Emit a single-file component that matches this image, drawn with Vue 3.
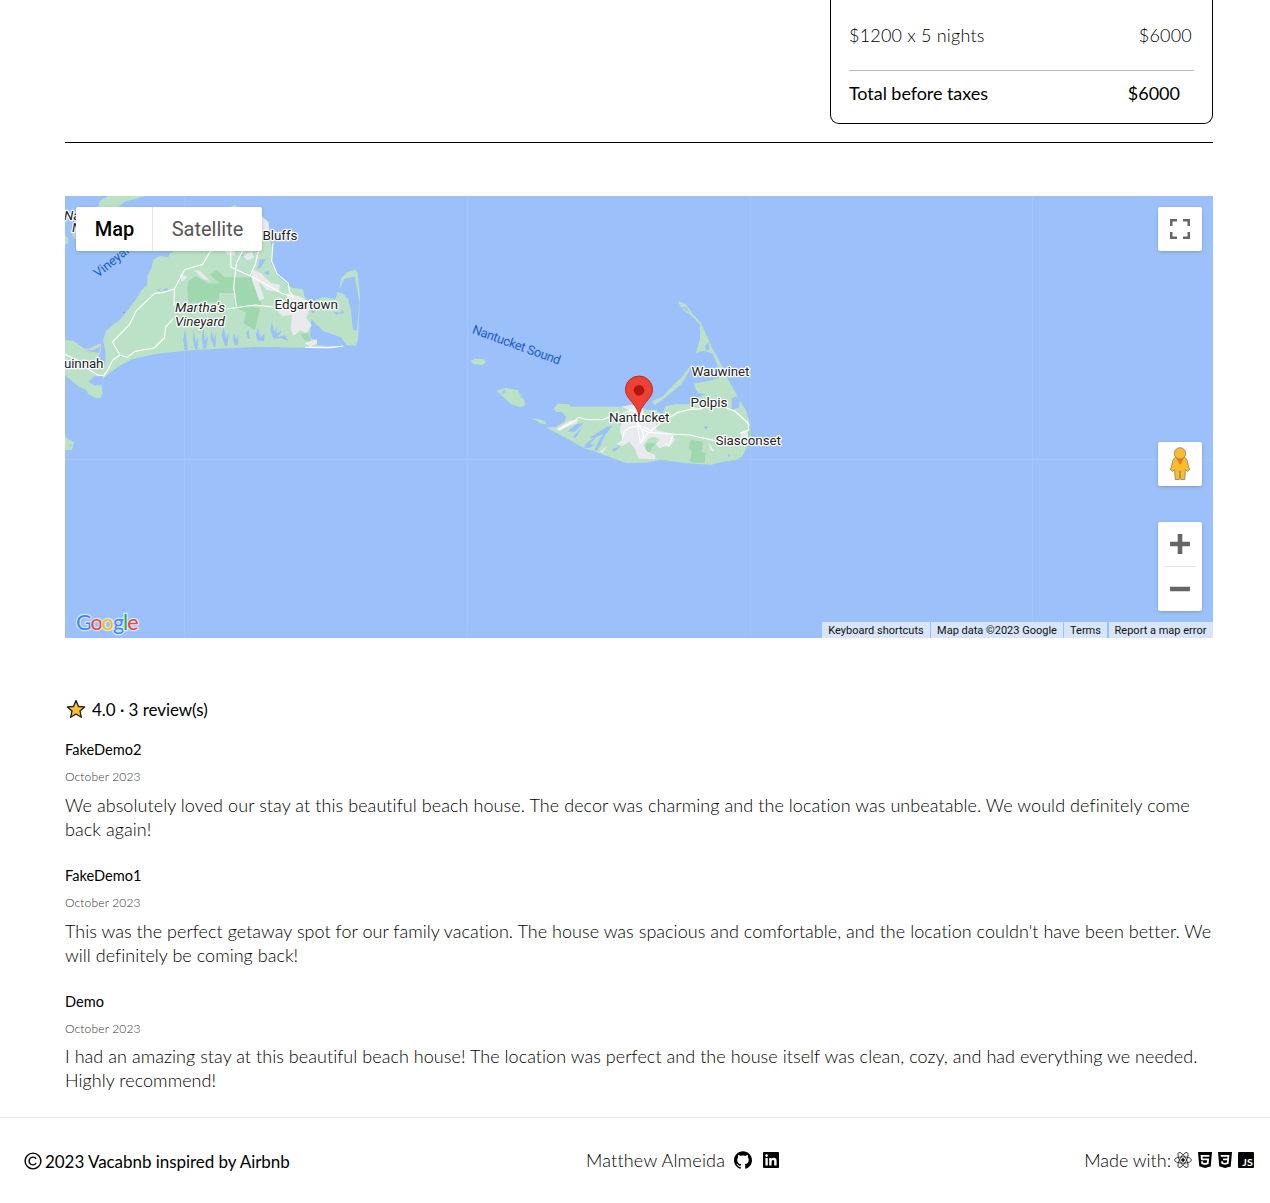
<script setup>
const reviews = [
  {
    name: 'FakeDemo2',
    date: 'October 2023',
    lines: [
      'We absolutely loved our stay at this beautiful beach house. The decor was charming and the location was unbeatable. We would definitely come',
      'back again!'
    ]
  },
  {
    name: 'FakeDemo1',
    date: 'October 2023',
    lines: [
      "This was the perfect getaway spot for our family vacation. The house was spacious and comfortable, and the location couldn't have been better. We",
      'will definitely be coming back!'
    ]
  },
  {
    name: 'Demo',
    date: 'October 2023',
    lines: [
      'I had an amazing stay at this beautiful beach house! The location was perfect and the house itself was clean, cozy, and had everything we needed.',
      'Highly recommend!'
    ]
  }
]
</script>

<template>
  <div class="page">
    <main class="content">
      <section class="price-card">
        <div class="price-row nightly"><span>$1200 x 5 nights</span><span>$6000</span></div>
        <div class="price-row total"><span>Total before taxes</span><span>$6000</span></div>
      </section>
      <div class="divider"></div>

      <section class="map">
        <svg class="tiles" viewBox="0 0 1148 442" width="1148" height="442">
          <rect width="1148" height="442" fill="#9cc0f9" />
          <path d="M119.500 0V442M402.500 0V442M685.500 0V442M967.500 0V442M0 263.500H1148" stroke="#a4c5f8" fill="none" />
          <!-- Martha's Vineyard -->
          <g transform="scale(.33333)">
            <g fill="#bbe2c6">
              <path d="M100 33L105 14L130 0H240L215 8L180 16L160 33ZM25 92L33 100V132L22 120ZM0 118L9 126L10 142L0 146Z" />
              <path fill-rule="evenodd" d="M495 33L508 26L522 33L590 60L610 80L614 125L621 155L619 205L640 242L667 265L680 275L714 280L718 300L729 316L735 342L747 353L750 312L775 304L812 309L818 288L836 294L850 312L858 345L864 402L875 405L880 360L883 318L876 276L869 242L838 248L823 278L828 247L848 228L870 221L878 230L885 298L883 354L879 430L873 449L846 448L826 423L776 406L749 380L739 368L735 425L757 435L756 448L830 452L715 455L590 452L480 457L360 464L275 473L200 490L160 512L132 532L114 548L109 566L113 591L107 605L91 607L68 592L66 584L42 572L0 538V431L25 434L48 451L63 465L105 470L99 492L97 520L115 518L122 492L121 463L114 433L123 405L144 386L161 375L180 353L207 319L228 285L247 265L247 240L259 217L266 190L285 180L310 184L312 174L340 160Z" />
            </g>
            <g fill="#9fd7af">
              <path d="M370 255L392 240L428 262H465L434 237L455 223L480 244H558L575 278L590 326L545 330L585 337L570 403L536 382L543 350L507 332V291H463L461 318L370 320L367 275ZM706 414L730 412L738 438L718 433Z" />
            </g>
            <g fill="#e8eaed">
              <path d="M386 222L405 225L434 254L416 250ZM344 234L368 243L350 258ZM590 60L610 78L614 112L590 120ZM478 165H509V179L488 175ZM535 180L560 165L567 185L548 193ZM563 220L588 232L616 260L645 266L642 289L605 282L580 255L598 307L583 314L560 250ZM668 292L706 302L731 316L732 342L724 367L740 388L725 412L706 403L686 420L677 398L681 357L650 360L630 332L662 318ZM718 440L756 430V443L735 453Z" />
            </g>
            <path d="M46 450L60 458L75 457L101 443H109L107 470L84 474L65 468Z" fill="#c8d6d0" />
            <path d="M62 464L86 461L106 452L102 470Z" fill="#9cc0f9" />
            <g fill="#9cc0f9">
              <path d="M359 463L355 430L359 402L364 421L368 463ZM391 461L384 432L386 402L392 440L399 420L398 461ZM416 459L410 426L415 396L420 433L430 420L424 456ZM447 453L437 426L439 402L447 431L454 408L451 453ZM480 451L470 420L475 394L484 427L492 405L487 450ZM509 448L504 429L507 410L515 433L521 412L519 447ZM549 427L544 411L550 400L555 430ZM578 434L573 417L579 395L587 426L600 410L597 435ZM625 428L616 402L620 378L628 408L640 385L633 412L651 404L638 423L660 418L670 436L649 427Z" />
              <path d="M70 557L88 541L115 540L108 566L90 569ZM273 282L287 278L285 286ZM293 282L304 275L313 286ZM577 220L584 190L603 190L587 215ZM596 231L611 224L613 238ZM525 182L531 174L538 180Z" />
              <path d="M805 347L825 350L833 343L838 350L815 356Z" />
            </g>
            <path d="M0 475L37 493L72 521L98 537L116 539L129 521L143 493L165 477L142 438L193 386L215 343L269 292L297 289L328 279L342 253L359 221L413 205L437 165M328 279L327 330M325 368L302 393L298 426L267 456L209 466L187 484L165 477M497 165L498 214L555 239L613 271L650 292L686 303L673 285L670 262L636 233L620 195L624 140M580 165L571 205L555 239M533 165L514 202L506 273L514 332M485 339L570 327L625 333M720 454L795 455L835 450" fill="none" stroke="#fff" stroke-width="3.400" stroke-linejoin="round" />
            <circle cx="176" cy="349" r="2" fill="#3ba766" />
          </g>
          <path d="M0 239L3 243L9 246L7 254H0Z" fill="#bbe2c6" />
          <circle cx="5.500" cy="249.500" r="1" fill="#9cc0f9" />
          <!-- Nantucket -->
          <g transform="translate(395 94) scale(.33333)">
            <g fill="#bbe2c6">
              <path d="M31 214L43 206L73 208L78 216L66 225L42 222ZM110 302L137 293L172 300L190 325L197 345L180 352L151 341L127 319ZM215 384L255 392L259 402L243 401Z" />
              <path d="M656 34L678 43L696 69L723 99L735 126L757 175L785 226L805 269L842 335L860 365L870 404L873 438L861 472L847 499L827 510L785 516L754 524L680 520L601 509L559 518L498 519L400 483L373 475L328 449L257 412L285 412L313 395L319 380L304 365L287 366L281 354L294 341L329 343L331 350L491 350L514 344L567 360L589 360L589 350L575 334L607 320L637 288L663 263L690 229L708 190L720 146L720 104L693 75L672 64L656 40Z" />
            </g>
            <path d="M707 190L730 182L758 190L773 227L793 254L765 269L707 282L703 288L712 305L739 313L718 320L695 343L648 342L617 348L607 371L592 364L585 345L607 329L640 303L665 281L686 247L696 217ZM735 168L745 157L748 178L738 182ZM815 325L831 319L840 332L836 353L815 359ZM731 410L740 407L745 414L737 418ZM805 490L812 497L805 502ZM370 473L384 455L408 441L401 450L389 462L402 465L391 473ZM388 443L408 431L441 410L457 409L434 437L422 465L409 483L403 480L418 449L430 431L403 445ZM338 441L369 409L347 444ZM322 424L351 402L372 398L343 426ZM455 478L485 467L463 485Z" fill="#9cc0f9" />
            <path d="M701 280L745 274L795 259L812 284L820 315L800 335L760 320L712 307Z" fill="#bbe2c6" />
            <path d="M664 51L678 49L688 66L677 64ZM124 307L134 297L138 309L127 314ZM177 311L190 323L186 328Z" fill="#a7cce8" />
            <g fill="#9fd7af">
              <path d="M692 449L728 455L725 486L737 489L734 519L690 517L695 485L686 475ZM559 459L589 460L574 475L566 500L552 488ZM468 469L498 449L489 469ZM862 410H873V437L863 441Z" />
            </g>
            <g fill="#e8eaed">
              <path d="M289 417L326 393L354 389L351 399L319 412L300 423ZM485 350L514 344L548 354L553 372L545 385L573 400L588 400L590 421L633 430L645 451L633 464L598 475L587 462L600 448L581 440L564 447L550 466L561 484L586 495V507L535 506L525 477L508 455L486 469L468 463L489 449L480 426L482 406L505 382L505 359ZM417 487L441 468L430 487ZM746 457L763 484L752 481ZM843 430L863 421L864 448L844 448Z" />
            </g>
            <path d="M295 419L347 391L355 382L375 388L428 389L452 379M487 371L514 359L553 373M530 390L541 415L564 427L635 432L690 435L764 452M570 423L601 400L654 367L690 358L728 356M799 354L824 363L864 399L866 420L840 430M487 450L492 426L510 412L540 407L551 436L542 461M566 425L545 455M577 425L549 410M640 434L627 469L616 460M530 390L541 460" fill="none" stroke="#fff" stroke-width="3.400" stroke-linejoin="round" />
          </g>
          <g class="places">
            <text x="-1" y="23.500" font-style="italic">Na</text><text x="7" y="36" font-style="italic">N</text>
            <text x="197.500" y="43.500" textLength="35">Bluffs</text>
            <text x="209.500" y="113" textLength="63.500">Edgartown</text>
            <text x="110" y="116" textLength="50" font-style="italic">Martha's</text>
            <text x="110" y="129.500" textLength="50" font-style="italic">Vineyard</text>
            <text x="-1" y="171.500" textLength="39.500">uinnah</text>
            <text x="626.500" y="179.500" textLength="58">Wauwinet</text>
            <text x="625.500" y="210.500" textLength="37">Polpis</text>
            <text x="544" y="226" textLength="60.500">Nantucket</text>
            <text x="650.500" y="249" textLength="65.500">Siasconset</text>
          </g>
          <g class="waters">
            <text transform="translate(33 82) rotate(-39)">Vineyard</text>
            <text transform="translate(406.500 137) rotate(20)" textLength="93">Nantucket Sound</text>
          </g>
          <g transform="translate(560 180)">
            <path d="M14 40.500C13 33.500 10.500 30.500 6.500 25.500C3 21 .5 18.500 .5 13.500A13.500 13.500 0 0 1 27.500 13.500C27.500 18.500 25 21 21.500 25.500C17.500 30.500 15 33.500 14 40.500Z" fill="#ea4335" stroke="#c5221f" />
            <circle cx="14" cy="14.300" r="5.300" fill="#b31412" />
          </g>
          <text class="google" x="11" y="434" textLength="62.500"><tspan fill="#4285f4">G</tspan><tspan fill="#ea4335">o</tspan><tspan fill="#fbbc04">o</tspan><tspan fill="#4285f4">g</tspan><tspan fill="#34a853">l</tspan><tspan fill="#ea4335">e</tspan></text>
        </svg>

        <div class="map-types"><span class="active">Map</span><span class="satellite">Satellite</span></div>
        <button class="control fullscreen" aria-label="Toggle fullscreen view">
          <svg width="20" height="20" viewBox="0 0 20 20"><path d="M0 0H7V2.500H2.500V7H0ZM13 0H20V7H17.500V2.500H13ZM0 13H2.500V17.500H7V20H0ZM17.500 13H20V20H13V17.500H17.500Z" fill="#666" /></svg>
        </button>
        <button class="control pegman" aria-label="Street View">
          <svg width="20" height="34" viewBox="0 0 20 34">
            <path d="M5 10.500H15L17 13L19.500 23L17.500 24.500L15.400 22.500L14.800 32.500H10.700L10.200 24H9.800L9.300 32.500H5.200L4.600 22.500L2.500 24.500L.5 23L3 13Z" fill="#fbbc2c" stroke="#888066" stroke-width=".8" />
            <path d="M6.200 11.500H13.800L10.200 18Z" fill="#e57e25" />
            <circle cx="10" cy="6.400" r="5.700" fill="#fbbc2c" stroke="#888066" stroke-width=".8" />
          </svg>
        </button>
        <div class="zoomer">
          <svg width="44" height="89" viewBox="0 0 44 89"><path d="M12 22H32M22 12V32M12 67H32" stroke="#666" stroke-width="4.600" /><path d="M5 44.500H38" stroke="#e6e6e6" /></svg>
        </div>
        <div class="attribution">
          <span class="keys">Keyboard shortcuts</span><span class="data">Map data ©2023 Google</span><span class="terms">Terms</span><span class="report">Report a map error</span>
        </div>
      </section>

      <section class="reviews">
        <h2>
          <svg width="22" height="20" viewBox="0 0 22 20"><path d="M11 1.400L13.500 7.500L19.600 7.900L15 12.100L16.400 18.300L11 15L5.600 18.300L7 12.100L2.400 7.900L8.500 7.500Z" fill="#ffc02e" stroke="#1d1d1d" stroke-width="1.300" stroke-linejoin="round" /></svg>
          <span>4.0 · 3 review(s)</span>
        </h2>
        <article v-for="(r, i) in reviews" :key="r.name" :class="'review-' + i">
          <h3>{{ r.name }}</h3>
          <time>{{ r.date }}</time>
          <p><span v-for="line in r.lines" :key="line">{{ line }}</span></p>
        </article>
      </section>
    </main>

    <footer>
      <div class="copyright">
        <svg width="18" height="18" viewBox="0 0 18 18" fill="none" stroke="#000" stroke-width="1.400"><circle cx="9" cy="9" r="7.900" /><path d="M12.200 6.800A3.900 3.900 0 1 0 12.200 11.200" /></svg>
        <span>2023 Vacabnb inspired by Airbnb</span>
      </div>
      <div class="author">
        <span>Matthew Almeida</span>
        <svg class="github" width="18" height="18" viewBox="0 0 24 24"><path d="M12 .297c-6.630 0-12 5.373-12 12 0 5.303 3.438 9.800 8.205 11.385.6.113.82-.258.82-.577 0-.285-.01-1.040-.015-2.040-3.338.724-4.042-1.610-4.042-1.610C4.422 18.070 3.633 17.700 3.633 17.700c-1.087-.744.084-.729.084-.729 1.205.084 1.838 1.236 1.838 1.236 1.070 1.835 2.809 1.305 3.495.998.108-.776.417-1.305.76-1.605-2.665-.3-5.466-1.332-5.466-5.930 0-1.310.465-2.380 1.235-3.220-.135-.303-.54-1.523.105-3.176 0 0 1.005-.322 3.300 1.230.96-.267 1.980-.399 3-.405 1.020.006 2.040.138 3 .405 2.280-1.552 3.285-1.230 3.285-1.230.645 1.653.24 2.873.12 3.176.765.84 1.230 1.910 1.230 3.220 0 4.610-2.805 5.625-5.475 5.920.42.36.81 1.096.81 2.220 0 1.606-.015 2.896-.015 3.286 0 .315.21.69.825.57C20.565 22.092 24 17.592 24 12.297c0-6.627-5.373-12-12-12" /></svg>
        <svg class="linkedin" width="16" height="16" viewBox="0 0 16 16"><rect width="16" height="16" rx="1" /><g fill="#fff"><circle cx="3.600" cy="3.600" r="1.350" /><path d="M2.400 6H4.800V13.600H2.400ZM6.200 6H8.500V7C9 6.200 9.800 5.800 10.900 5.800C13 5.800 13.600 7.200 13.600 9.400V13.600H11.200V9.900C11.200 8.700 11 7.900 10 7.900C8.900 7.900 8.600 8.700 8.600 9.900V13.600H6.200Z" /></g></svg>
      </div>
      <div class="made">
        <span>Made with:</span>
        <svg class="react" width="18" height="18" viewBox="0 0 18 18" fill="none" stroke="#111" stroke-width=".75"><ellipse cx="9" cy="9" rx="8.500" ry="3.200" /><ellipse cx="9" cy="9" rx="8.500" ry="3.200" transform="rotate(60 9 9)" /><ellipse cx="9" cy="9" rx="8.500" ry="3.200" transform="rotate(120 9 9)" /><circle cx="9" cy="9" r="1.400" fill="#111" /></svg>
        <svg class="html" width="14" height="16" viewBox="1.500 0 21 24"><path fill-rule="evenodd" d="M1.500 0h21l-1.910 21.563L11.977 24l-8.564-2.438L1.500 0zm7.031 9.750l-.232-2.718 10.059.003.23-2.622L5.412 4.410l.698 8.010h9.126l-.326 3.426-2.910.804-2.955-.81-.188-2.110H6.248l.33 4.171L12 19.351l5.379-1.443.744-8.157H8.531z" /></svg>
        <svg class="css" width="14" height="16" viewBox="1.500 0 21 24"><path fill-rule="evenodd" d="M1.500 0h21l-1.910 21.563L11.977 24l-8.565-2.438L1.500 0zm17.090 4.413L5.410 4.410l.213 2.622 10.125.002-.255 2.716h-6.640l.24 2.573h6.182l-.366 3.523-2.910.804-2.956-.81-.188-2.110h-2.610l.29 3.855L12 19.288l5.373-1.530L18.590 4.414z" /></svg>
        <svg class="js" width="16" height="16" viewBox="0 0 16 16"><rect width="16" height="16" rx="1" /><text x="4.300" y="14" textLength="10.500" lengthAdjust="spacingAndGlyphs" fill="#fff">JS</text></svg>
      </div>
    </footer>
  </div>
</template>

<style>
body { background: #fff; overflow: hidden; }
</style>

<style scoped>
.page { height: 1203px; display: flex; flex-direction: column; font-family: Lato, "Open Sans", sans-serif; color: #000; overflow: hidden; }
.page * { box-sizing: border-box; }
.content { width: 1148px; margin-left: 65px; height: 1117px; display: flex; flex-direction: column; flex: none; }
.price-card { align-self: flex-end; width: 383px; height: 124px; flex: none; border: 1px solid #000; border-top: 0; border-radius: 0 0 9px 9px; padding: 0 18px; font-size: 18px; }
.price-row { display: flex; justify-content: space-between; white-space: nowrap; }
.nightly { height: 71px; padding: 23px 2px 0 0; border-bottom: 1px solid #bbb; line-height: 24px; font-weight: 300; letter-spacing: .2px; }
.total { padding: 10px 14px 0 0; line-height: 24px; }
.total span:first-child { letter-spacing: -.06px; }
.divider { height: 1px; background: #000; margin: 18px 0 53px; flex: none; }

.map { position: relative; height: 442px; flex: none; overflow: hidden; font-family: Roboto, sans-serif; }
.tiles { display: block; }
.places { font-size: 13.500px; fill: #202124; stroke: #fff; stroke-width: 2.500px; stroke-linejoin: round; paint-order: stroke; }
.waters { font-size: 12.800px; fill: #1c5ec4; }
.google { font: 21.500px Lato, sans-serif; stroke: #d9e6fb; stroke-width: 2.500px; paint-order: stroke; }
.map-types { position: absolute; left: 11px; top: 11px; width: 186px; height: 44px; display: flex; background: #fff; border-radius: 2px; box-shadow: 0 1px 4px -1px rgba(0, 0, 0, .3); font-size: 20px; line-height: 44px; text-align: center; }
.active { width: 77px; font-weight: 500; border-right: 1px solid #e6e6e6; padding-left: 1px; }
.satellite { flex: 1; color: #565656; }
.control, .zoomer { position: absolute; right: 11px; width: 44px; height: 44px; padding: 0; border: 0; border-radius: 2px; background: #fff; box-shadow: 0 1px 4px -1px rgba(0, 0, 0, .3); display: flex; align-items: center; justify-content: center; }
.fullscreen { top: 11px; }
.pegman { top: 246px; padding-right: 1px; }
.zoomer { top: 326px; height: 89px; }
.attribution { position: absolute; right: 0; bottom: 0; height: 16px; display: flex; gap: 1px; font-size: 11px; line-height: 17px; color: #111; text-align: center; white-space: nowrap; }
.attribution span { background: #d8e5f8; }
.keys { width: 108px; }
.data { width: 132px; }
.terms { width: 43px; }
.report { width: 104px; margin-left: 1px; padding-right: 1px; }

.reviews { padding-top: 60px; }
h2, h3, p { margin: 0; font-weight: 400; }
h2 { height: 24px; display: flex; align-items: center; font-size: 17px; line-height: 24px; letter-spacing: -.05px; }
h2 span { margin-left: 5px; }
h2 svg { position: relative; top: -1px; }
article { height: 126px; padding-top: 18px; }
h3 { font-size: 14.600px; line-height: 20px; }
time { display: block; margin-top: 8px; font-size: 12px; line-height: 18px; color: #333; font-weight: 300; letter-spacing: .15px; }
p { margin-top: 7px; font-size: 18px; font-weight: 300; line-height: 24px; white-space: nowrap; }
.review-0 p { letter-spacing: .07px; }
.review-1 p { letter-spacing: .033px; }
.review-2 p { letter-spacing: .045px; margin-top: 6px; }
p span { display: block; }

footer { height: 86px; flex: none; border-top: 1px solid #e5e5e5; display: flex; justify-content: space-between; align-items: center; padding: 0 16px 0 24px; font-size: 18px; line-height: 24px; }
footer div { display: flex; align-items: center; white-space: nowrap; }
footer svg { flex: none; display: block; position: relative; top: -1px; }
.copyright { width: 562px; }
.copyright svg { top: 0; }
.copyright span { margin-left: 3px; padding-top: 2px; font-size: 17px; letter-spacing: -.05px; }
.author { flex: 1; font-weight: 300; }
.author span { width: 148px; letter-spacing: .2px; }
.linkedin { margin-left: 11px; }
.made { font-weight: 300; }
.react { margin-left: 3px; }
.html { margin-left: 6px; }
.css { margin-left: 6px; }
.js { margin-left: 6px; }
.author span, .made span { padding-bottom: 2px; }
.js text { font: 700 9.500px Lato, sans-serif; }
</style>
